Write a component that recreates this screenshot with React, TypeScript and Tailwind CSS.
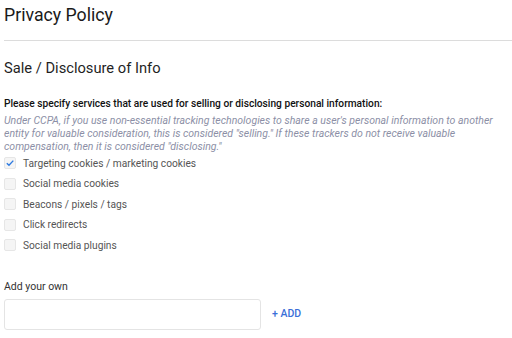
import React from "react";

const items = [
  { label: "Targeting cookies / marketing cookies", checked: true },
  { label: "Social media cookies", checked: false },
  { label: "Beacons / pixels / tags", checked: false },
  { label: "Click redirects", checked: false },
  { label: "Social media plugins", checked: false },
];

export default function App() {
  return (
    <div className="w-[512px] h-[338px] bg-white overflow-hidden" style={{ fontFamily: "Roboto, 'Liberation Sans', sans-serif" }}>
      <div className="pl-[4px]">
        <h1 className="text-[17.7px] leading-[22px] pt-[4px] text-[#1a1a1a] font-normal">Privacy Policy</h1>
        <div className="mt-[14px] h-px bg-[#dcdcdc]" />
        <h2 className="mt-[18px] text-[14.7px] leading-[18px] text-[#1f1f1f]">Sale / Disclosure of Info</h2>
        <p className="mt-[20px] text-[10.2px] leading-[13px] text-[#111] font-medium">
          Please specify services that are used for selling or disclosing personal information:
        </p>
        <p className="mt-[4px] text-[10.5px] leading-[13px] italic text-[#8c8fa6]">
          Under CCPA, if you use non-essential tracking technologies to share a user's personal information to another
          entity for valuable consideration, this is considered "selling." If these trackers do not receive valuable
          compensation, then it is considered "disclosing."
        </p>
        <div className="mt-[0px] flex flex-col">
          {items.map((it) => (
            <div key={it.label} className="flex items-center h-[20.5px] gap-[7px]">
              <div className="w-[12px] h-[12px] rounded-[2px] border border-[#e6e6e6] bg-[#f5f5f5] flex items-center justify-center">
                {it.checked && (
                  <svg width="10" height="10" viewBox="0 0 10 10">
                    <path d="M1.8 5.2 L4 7.3 L8.3 2.6" fill="none" stroke="#2f7be0" strokeWidth="1.4" />
                  </svg>
                )}
              </div>
              <span className="text-[10.2px] text-[#555]">{it.label}</span>
            </div>
          ))}
        </div>
        <div className="mt-[24px] text-[10.5px] leading-[13px] text-[#333]">Add your own</div>
        <div className="mt-[6px] flex items-center">
          <div className="w-[257px] h-[31px] border border-[#e4e4e4] rounded-[3px] bg-white" />
          <button className="ml-[11px] text-[10.5px] font-medium text-[#3a6fd8]">+ ADD</button>
        </div>
      </div>
    </div>
  );
}
